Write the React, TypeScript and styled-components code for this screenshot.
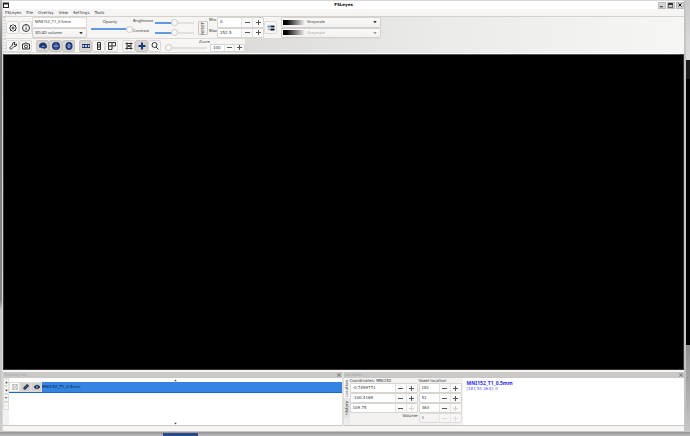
import React from "react";
import styled, { createGlobalStyle } from "styled-components";

const Global = createGlobalStyle`
  * { box-sizing: border-box; }
  body { margin: 0; }
  body, button, input, select {
    font-family: "DejaVu Sans", sans-serif;
    font-size: 4px;
    line-height: 6px;
    color: #2e3436;
  }
  button, input, select { margin: 0; padding: 0; border: 0; border-radius: 0; outline: 0; min-width: 0; }
`;

const Desktop = styled.div`
  min-height: 100vh;
  display: flex;
  flex-direction: column;
  background: linear-gradient(#c9c9c9 0, #dedede 60px, #1c1c1c 60px, #1c1c1c 79px, #000 79px, #000 345px, #8e8e8e 345px, #c8c8c8 100%) right / 4px 100% no-repeat,
    linear-gradient(#bbb 0, #777 50px, #858585 300px, #c4c4c4 310px, #ccc 100%);
`;
const Window = styled.div`
  flex: 1;
  display: flex;
  flex-direction: column;
  margin: 0 4px 0 2px;
  background: #f6f5f4;
  border: 1px solid #d8d8d8;
  border-right: 2px solid #c4c4c4;
  border-bottom-color: #c4c4c4;
`;
const Taskbar = styled.div`
  height: 4px;
  padding: 1px 0 0 163px;
  background: linear-gradient(#929496, #bbb);
`;
const Task = styled.div`
  width: 35px;
  height: 3px;
  background: #2b4a87;
`;
const TitleBar = styled.header`
  height: 8px;
  display: flex;
  align-items: center;
  justify-content: space-between;
  background: #fff;
`;
const Title = styled.h1`
  margin: 0;
  font-size: 4px;
  line-height: 8px;
  font-weight: 700;
  color: #000;
`;
const WindowMark = styled.div`
  width: 26px;
  height: 6px;
  svg { display: block; }
`;
const WindowButtons = styled.div`
  display: flex;
  gap: 1px;
`;
const WindowButton = styled.button`
  width: 8px;
  height: 7px;
  display: grid;
  place-items: center;
  background: #d4d4d4;
  border: 1px solid #bcbcbc;
  color: #111;
`;
const MenuBar = styled.nav`
  height: 8px;
  display: flex;
  align-items: center;
  gap: 5px;
  padding-left: 2px;
  border-bottom: 1px solid #d5d1cd;
`;
const MenuItem = styled.button`
  background: none;
`;
const ToolArea = styled.div`
  display: flex;
  flex-direction: column;
  align-items: flex-start;
  background: linear-gradient(90deg, #dcdbda 35%, #ebebe9 65%, #f6f6f4 100%);
  border-bottom: 1px solid #fff;
`;
const Toolbar = styled.div<{ $h: number }>`
  height: ${(p) => p.$h}px;
  display: flex;
  align-items: center;
  background: #f6f5f4;
  border-bottom: 1px solid #dddbd8;
`;
const Grip = styled.div`
  width: 3px;
  align-self: stretch;
  background: repeating-linear-gradient(#d9d7d5 0 1px, #efeeec 1px 3px);
`;
const IconButton = styled.button<{ $on?: boolean; $small?: boolean }>`
  width: 13px;
  height: ${(p) => (p.$small ? 12 : 13)}px;
  display: grid;
  place-items: center;
  background: ${(p) => (p.$on ? "#d8d4d0" : "#f8f7f6")};
  border: 1px solid ${(p) => (p.$on ? "#cdc7c2" : "#dedad6")};
  border-radius: 2px;
  color: #2e3436;
`;
const ToolGroup = styled.div`
  display: flex;
  margin-right: 4px;
`;
const Column = styled.div<{ $w?: number }>`
  display: flex;
  flex-direction: column;
  justify-content: center;
  align-self: stretch;
  flex: none;
  width: ${(p) => (p.$w ? p.$w + "px" : "auto")};
`;
const Field = styled.input`
  flex: 1;
  width: 100%;
  padding: 0 2px;
  background: #fff;
  border: 1px solid #dcd8d4;
  border-radius: 1px;
  font-family: "Noto Sans", sans-serif;
`;
const Picker = styled.div<{ $dim?: boolean; $ramp?: boolean }>`
  flex: 1;
  display: flex;
  align-items: center;
  padding: 0 3px 0 ${(p) => (p.$ramp ? 1 : 2)}px;
  background: linear-gradient(#faf9f8, #f2f1f0);
  border: 1px solid #d5d0cc;
  border-radius: 1px;
  color: ${(p) => (p.$dim ? "#929595" : "#2e3436")};
`;
const Ramp = styled.div`
  width: 22px;
  height: 5px;
  margin-right: 2px;
  background: linear-gradient(90deg, #000 15%, #f6f5f4);
`;
const Select = styled.select`
  flex: 1;
  appearance: none;
  background: none;
  height: 6px;
  font-family: "Noto Sans", sans-serif;
  &:disabled { opacity: 1; color: #a5a7a6; }
`;
const SliderStack = styled.label`
  display: flex;
  flex-direction: column;
  align-items: center;
  padding: 2px 0 0 4px;
  width: 46px;
  align-self: stretch;
`;
const SliderTitle = styled.span`
  padding-right: 4px;
  font-family: "Noto Sans", sans-serif;
`;
const SliderRow = styled.label`
  height: 10px;
  display: flex;
  align-items: center;
  justify-content: space-between;
`;
const Caption = styled.span`
  align-self: flex-start;
  line-height: 5px;
  font-family: "Noto Sans", sans-serif;
`;
const Range = styled.input<{ $fill: number; $w: number }>`
  appearance: none;
  width: ${(p) => p.$w}px;
  height: 8px;
  background: linear-gradient(90deg, #5c9be6 ${(p) => p.$fill}%, #e2dfdc ${(p) => p.$fill}%) center / 100% 2px no-repeat;
  &::-webkit-slider-thumb {
    appearance: none;
    width: 7px;
    height: 7px;
    border: 1px solid #cdc7c2;
    border-radius: 50%;
    background: #fbfafa;
  }
`;
const ResetButton = styled.button`
  width: 10px;
  height: 14px;
  margin: 0 1px 0 4px;
  display: grid;
  place-items: center;
  background: #f4f3f2;
  border: 1px solid #cdc7c2;
  border-radius: 1px;
  span { writing-mode: vertical-rl; transform: rotate(180deg); line-height: 6px; color: #111; }
`;
const SpinBox = styled.div<{ $off?: boolean }>`
  flex: 1;
  display: flex;
  align-items: stretch;
  background: ${(p) => (p.$off ? "#f6f5f4" : "#fff")};
  border: 1px solid #d8d4d0;
  border-radius: 1px;
  opacity: ${(p) => (p.$off ? 0.7 : 1)};
`;
const SpinField = styled.input`
  flex: 1;
  width: 0;
  padding: 0 2px;
  background: none;
`;
const Step = styled.button<{ $faint?: boolean; $w: number }>`
  width: ${(p) => p.$w}px;
  display: grid;
  place-items: center;
  background: #fbfafa;
  border-left: 1px solid #e4e1de;
  color: ${(p) => (p.$faint ? "#d0cecb" : "#4a4f51")};
`;
const SpinLine = styled.label`
  flex: 1;
  display: flex;
`;
const SpinLabel = styled.span`
  width: 8px;
  line-height: 5px;
  font-family: "Noto Sans", sans-serif;
`;
const ZoomBox = styled.div`
  display: flex;
  flex-direction: column;
  width: 80px;
  align-self: stretch;
`;
const ZoomLabel = styled.label`
  height: 4px;
  line-height: 5px;
  padding-left: 34px;
  font-family: "Noto Sans", sans-serif;
`;
const ZoomControls = styled.div`
  flex: 1;
  display: flex;
  align-items: center;
  gap: 3px;
`;
const Canvas = styled.main`
  flex: 1;
  background: #000;
  border: 1px solid #333;
  border-top-color: #555;
`;
const Panes = styled.div`
  display: grid;
  grid-template-columns: 339fr 341fr;
  gap: 2px;
  margin-top: 2px;
  background: #dedede;
`;
const Pane = styled.section`
  height: 54px;
  display: flex;
  flex-direction: column;
  background: #fff;
  border-bottom: 1px solid #c9c6c3;
`;
const PaneTitle = styled.header`
  height: 6px;
  flex: none;
  display: flex;
  align-items: center;
  justify-content: space-between;
  padding: 0 1px;
  background: #c9c8c7;
  color: #a3a2a1;
`;
const PaneClose = styled.button`
  width: 4px;
  height: 4px;
  display: grid;
  place-items: center;
  background: #b4b4b4;
  color: #8a8a8a;
`;
const PaneBody = styled.div`
  flex: 1;
  min-height: 0;
  display: flex;
`;
const OrderButtons = styled.div`
  width: 6px;
  display: flex;
  flex-direction: column;
  background: #f3f2f1;
`;
const OrderButton = styled.button`
  height: 8px;
  background: #f8f7f6;
  border: 1px solid #dedad6;
  border-radius: 1px;
  display: grid;
  place-items: center;
`;
const List = styled.div`
  flex: 1;
  display: flex;
  flex-direction: column;
  justify-content: space-between;
`;
const ScrollMark = styled.button`
  height: 4px;
  background: none;
  display: grid;
  place-items: center;
  color: #444;
`;
const OverlayRow = styled.div`
  height: 11px;
  display: flex;
  align-items: center;
  background: #3584e4;
  border-bottom: 1px solid #1b6acb;
  line-height: 10px;
  color: #081c38;
  margin-bottom: auto;
`;
const RowButton = styled.button<{ $on?: boolean }>`
  width: 11px;
  height: 10px;
  display: grid;
  place-items: center;
  background: ${(p) => (p.$on ? "#d5d0cc" : "#fff")};
  border: 1px solid #dedad6;
  color: ${(p) => (p.$on ? "#1b2f63" : "#aaa")};
`;
const Tabs = styled.div`
  width: 6px;
  display: flex;
  flex-direction: column;
  background: #edebe9;
`;
const Tab = styled.button<{ $on?: boolean }>`
  height: 20px;
  display: grid;
  place-items: center;
  background: ${(p) => (p.$on ? "#faf9f8" : "#e6e4e1")};
  span { writing-mode: vertical-rl; transform: rotate(180deg); line-height: 6px; white-space: nowrap; }
`;
const Coords = styled.div<{ $w: number }>`
  width: ${(p) => p.$w}px;
  display: grid;
  grid-template-rows: 5px 10px 10px 10px 10px;
  background: #f3f2f1;
  padding-right: 1px;
`;
const Heading = styled.span<{ $right?: boolean }>`
  line-height: 5px;
  white-space: nowrap;
  text-align: ${(p) => (p.$right ? "right" : "left")};
`;
const Info = styled.div`
  flex: 1;
  padding: 3px 4px;
  color: #4a4aff;
  font: 4px/5px "DejaVu Sans", sans-serif;
  strong { display: block; color: #2a2aff; font: 700 5px/5px "Noto Sans", sans-serif; }
`;
const StatusBar = styled.footer`
  height: 5px;
`;

const Glyph = ({ children, s = 8, w = 2 }: { children: React.ReactNode; s?: number; w?: number }) => (
  <svg width={s} height={s} viewBox="0 0 16 16" fill="none" stroke="currentColor" strokeWidth={w} aria-hidden="true">
    {children}
  </svg>
);
const Minus = () => <Glyph s={5} w={3}><path d="M0 8H16" /></Glyph>;
const Plus = () => <Glyph s={5} w={3}><path d="M0 8H16M8 0V16" /></Glyph>;
const Down = ({ s = 4 }: { s?: number }) => <Glyph s={s}><path d="M1 4H15L8 13Z" fill="currentColor" stroke="none" /></Glyph>;
const Up = ({ s = 4 }: { s?: number }) => <Glyph s={s}><path d="M1 12H15L8 3Z" fill="currentColor" stroke="none" /></Glyph>;
const Cross = () => <Glyph s={4} w={4}><path d="M2 2L14 14M14 2L2 14" /></Glyph>;

const NAVY = "#18387c";
const brain = {
  sagittal: (
    <>
      <path d="M0 8C0 4 4 1 8 1C13 1 16 5 16 9C16 12 14 13 12 12L11 15L8 12L5 13L4 11C1 12 0 11 0 8Z" fill={NAVY} stroke="none" />
      <path d="M6 9L9 8L11 10" stroke="#aebbd5" />
    </>
  ),
  coronal: (
    <>
      <circle cx="8" cy="8" r="8" fill={NAVY} stroke="none" />
      <path d="M3 8H13" stroke="#c5cee0" />
      <path d="M6 4H10M6 12H10" stroke="#7b8fb8" />
    </>
  ),
  axial: (
    <>
      <ellipse cx="8" cy="8" rx="7" ry="8" fill={NAVY} stroke="none" />
      <ellipse cx="8" cy="8" rx="2" ry="4" stroke="#aebbd5" />
    </>
  ),
};

type SpinProps = { label: string; value: string; off?: boolean; faint?: boolean; step?: number };

function Spin({ label, value, off, faint, step = 11 }: SpinProps) {
  return (
    <SpinBox $off={off}>
      <SpinField aria-label={label} defaultValue={value} disabled={off} />
      <Step $w={step} aria-label={`Decrease ${label}`} $faint={off}><Minus /></Step>
      <Step $w={step} aria-label={`Increase ${label}`} $faint={off || faint}><Plus /></Step>
    </SpinBox>
  );
}

function ColourMap({ label, dim }: { label: string; dim?: boolean }) {
  return (
    <Picker $ramp $dim={dim}>
      <Ramp />
      <Select aria-label={label} disabled={dim}><option>Greyscale</option></Select>
      <Down />
    </Picker>
  );
}

export default function App() {
  return (
    <>
      <Global />
      <Desktop>
        <Window>
          <TitleBar>
            <WindowMark>
              <svg width="6" height="6" viewBox="0 0 6 6"><rect x="0.5" y="1.5" width="5" height="4" fill="#fff" stroke="#222" /><path d="M0 1.5H6" stroke="#222" strokeWidth="2" /></svg>
            </WindowMark>
            <Title>FSLeyes</Title>
            <WindowButtons>
              <WindowButton aria-label="Minimise"><Glyph s={5} w={3}><path d="M3 12H12" /></Glyph></WindowButton>
              <WindowButton aria-label="Maximise"><Glyph s={5}><path d="M1 3H15V14H1Z" /><path d="M1 3H15" strokeWidth="5" /></Glyph></WindowButton>
              <WindowButton aria-label="Close"><Cross /></WindowButton>
            </WindowButtons>
          </TitleBar>
          <MenuBar>
            {["FSLeyes", "File", "Overlay", "View", "Settings", "Tools"].map((m) => <MenuItem key={m}>{m}</MenuItem>)}
          </MenuBar>

          <ToolArea>
            <Toolbar $h={22}>
              <Grip />
              <IconButton aria-label="Display settings">
                <Glyph><path d="M8 1L10 3L13 3L13 6L15 8L13 10L13 13L10 13L8 15L6 13L3 13L3 10L1 8L3 6L3 3L6 3Z" /><circle cx="8" cy="8" r="2" /></Glyph>
              </IconButton>
              <IconButton aria-label="Overlay information">
                <Glyph><circle cx="8" cy="8" r="7" /><path d="M8 7V12M8 3V5" /></Glyph>
              </IconButton>
              <Column $w={55}>
                <Field aria-label="Overlay name" defaultValue="MNI152_T1_0.5mm" />
                <Picker>
                  <Select aria-label="Overlay type"><option>3D/4D volume</option></Select>
                  <Down />
                </Picker>
              </Column>
              <SliderStack>
                <SliderTitle>Opacity</SliderTitle>
                <Range type="range" defaultValue={100} $fill={92} $w={42} />
              </SliderStack>
              <Column $w={61}>
                <SliderRow><Caption>Brightness</Caption><Range type="range" defaultValue={50} $fill={50} $w={39} /></SliderRow>
                <SliderRow><Caption>Contrast</Caption><Range type="range" defaultValue={50} $fill={50} $w={39} /></SliderRow>
              </Column>
              <ResetButton><span>RESET</span></ResetButton>
              <Column $w={55}>
                <SpinLine><SpinLabel>Min</SpinLabel><Spin label="Minimum" value="0" /></SpinLine>
                <SpinLine><SpinLabel>Max</SpinLabel><Spin label="Maximum" value="252.5" /></SpinLine>
              </Column>
              <ToolGroup>
                <IconButton aria-label="Colour maps">
                  <Glyph>
                    <g stroke="none"><path d="M1 3H8V7H1Z" fill="#6c93c8" /><path d="M8 3H15V7H8Z" fill="#1d2b45" /><path d="M1 7H8V13H1Z" fill="#c2c7cc" /><path d="M8 7H15V10H8Z" fill="#8f989e" /><path d="M7 10H15V13H7Z" fill="#141414" /></g>
                  </Glyph>
                </IconButton>
              </ToolGroup>
              <Column $w={100}>
                <ColourMap label="Colour map" />
                <ColourMap label="Negative colour map" dim />
              </Column>
            </Toolbar>

            <Toolbar $h={14}>
              <Grip />
              <ToolGroup>
                <IconButton $small aria-label="View settings"><Glyph><path d="M1 12L7 6C6 3 9 0 12 1L10 4L12 6L15 4C16 7 13 10 10 9L4 15Z" /></Glyph></IconButton>
                <IconButton $small aria-label="Screenshot"><Glyph><path d="M1 4H5L6 2H10L11 4H15V14H1Z" /><circle cx="8" cy="9" r="3" /></Glyph></IconButton>
              </ToolGroup>
              <ToolGroup>
                <IconButton $small $on aria-label="Sagittal view"><Glyph>{brain.sagittal}</Glyph></IconButton>
                <IconButton $small $on aria-label="Coronal view"><Glyph>{brain.coronal}</Glyph></IconButton>
                <IconButton $small $on aria-label="Axial view"><Glyph>{brain.axial}</Glyph></IconButton>
              </ToolGroup>
              <ToolGroup>
                <IconButton $small $on aria-label="Horizontal layout"><Glyph><path d="M0 5H16V11H0ZM5 5V11M11 5V11" stroke={NAVY} /></Glyph></IconButton>
                <IconButton $small aria-label="Vertical layout"><Glyph><path d="M5 1H11V15H5ZM5 6H11M5 10H11" /></Glyph></IconButton>
                <IconButton $small aria-label="Grid layout"><Glyph><path d="M1 1H15V8H1ZM1 8V15H8V1" /></Glyph></IconButton>
              </ToolGroup>
              <ToolGroup>
                <IconButton $small aria-label="Movie mode"><Glyph><path d="M4 1V15M12 1V15M1 3H15M1 13H15M5 6L11 10M11 6L5 10" /></Glyph></IconButton>
                <IconButton $small $on aria-label="Show cursor"><Glyph w={4}><path d="M8 1V15M1 8H15" stroke={NAVY} /></Glyph></IconButton>
                <IconButton $small aria-label="Reset zoom"><Glyph><circle cx="7" cy="6" r="5" /><path d="M10 10L15 15" /></Glyph></IconButton>
              </ToolGroup>
              <ZoomBox>
                <ZoomLabel htmlFor="zoom">Zoom</ZoomLabel>
                <ZoomControls>
                  <Range id="zoom" type="range" defaultValue={0} $fill={0} $w={42} />
                  <Spin label="Zoom value" value="100" step={10} />
                </ZoomControls>
              </ZoomBox>
            </Toolbar>
          </ToolArea>

          <Canvas aria-label="Orthographic view" />

          <Panes>
            <Pane>
              <PaneTitle>Overlay list<PaneClose aria-label="Close overlay list"><Cross /></PaneClose></PaneTitle>
              <PaneBody>
                <OrderButtons>
                  <OrderButton aria-label="Move up"><Up s={3} /></OrderButton>
                  <OrderButton aria-label="Move down"><Down s={3} /></OrderButton>
                  <OrderButton>+</OrderButton>
                  <OrderButton>-</OrderButton>
                </OrderButtons>
                <List>
                  <ScrollMark aria-label="Scroll up"><Up s={3} /></ScrollMark>
                  <OverlayRow>
                    <RowButton aria-label="Save overlay"><Glyph s={6}><path d="M1 1H15V15H1ZM4 1V6H12V1M4 15V10H12V15" /></Glyph></RowButton>
                    <RowButton $on aria-label="Link overlay"><Glyph s={6} w={3}><path d="M7 6L11 2L14 5L10 9L7 6M9 10L5 14L2 11L6 7L9 10" /></Glyph></RowButton>
                    <RowButton $on aria-label="Toggle visibility"><Glyph s={6}><path d="M0 8C4 2 12 2 16 8C12 14 4 14 0 8Z" fill="currentColor" /><circle cx="8" cy="8" r="2" stroke="#8db4e4" /></Glyph></RowButton>
                    MNI152_T1_0.5mm
                  </OverlayRow>
                  <ScrollMark aria-label="Scroll down"><Down s={3} /></ScrollMark>
                </List>
              </PaneBody>
            </Pane>
            <Pane>
              <PaneTitle>Location<PaneClose aria-label="Close location"><Cross /></PaneClose></PaneTitle>
              <PaneBody>
                <Tabs>
                  <Tab $on><span>Location</span></Tab>
                  <Tab><span>History</span></Tab>
                </Tabs>
                <Coords $w={69}>
                  <Heading>Coordinates: MNI152</Heading>
                  <Spin label="X coordinate" value="-0.7499771" />
                  <Spin label="Y coordinate" value="-100.4169" />
                  <Spin label="Z coordinate" value="109.75" faint />
                  <Heading $right>Volume</Heading>
                </Coords>
                <Coords $w={44}>
                  <Heading>Voxel location</Heading>
                  <Spin label="X voxel" value="181" />
                  <Spin label="Y voxel" value="51" />
                  <Spin label="Z voxel" value="363" faint />
                  <Spin label="Volume" value="0" off />
                </Coords>
                <Info><strong>MNI152_T1_0.5mm</strong>[181 51 363]: 0</Info>
              </PaneBody>
            </Pane>
          </Panes>
          <StatusBar />
        </Window>
        <Taskbar><Task /></Taskbar>
      </Desktop>
    </>
  );
}
